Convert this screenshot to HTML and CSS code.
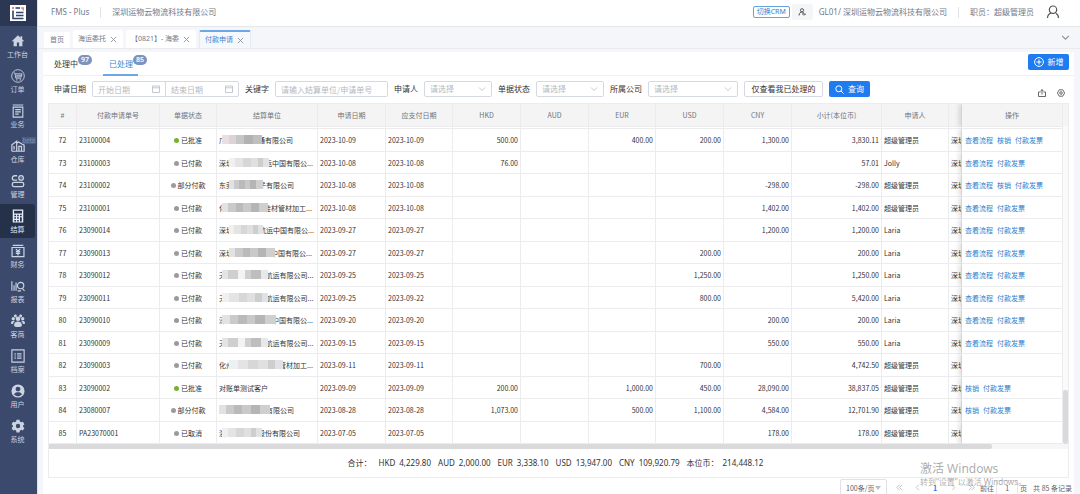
FILE: index.html
```html
<!DOCTYPE html>
<html lang="zh-CN">
<head>
<meta charset="utf-8">
<meta name="viewport" content="width=device-width, initial-scale=1">
<title>FMS - Plus 付款申请</title>
<link rel="stylesheet" href="styles.css">
</head>
<body>
<nav class="sidebar" aria-label="主导航">
  <div class="logo">
    <svg width="16" height="16" viewBox="0 0 16 16"><path fill="#fff" d="M0 0h16v16H0z"/><path d="M3 5.500v8h10.500M6 7.500h7.500M6 10.500h7.500" fill="none" stroke="#2f4470" stroke-width="1.600"/><path d="M5.500 3H10" stroke="#2f4470" stroke-width="1.600"/><path d="M11 3h2.300v2.500" fill="none" stroke="#e58a72" stroke-width="1.500"/><path d="M2 2h2v2H2z" fill="#e58a72"/></svg>
  </div>
  <a class="nav-item" href="#"><svg viewBox="0 0 16 16"><path fill="currentColor" d="M8 1.500 0.800 8.300h2.200V14h3.700V9.800h2.600V14H13V8.300h2.200L12.800 6V2.500h-2v1.700z"/></svg>工作台</a>
  <a class="nav-item" href="#"><svg viewBox="0 0 16 16" fill="none" stroke="currentColor"><circle cx="8" cy="8" r="7.200"/><path d="M3 4.500h1.500l1 6h6.300M5 5.500h7.500l-.8 3.500H5.300M6 7.200h6"/><path d="M6 12.500h1.300M10 12.500h1.300" stroke-width="1.300"/></svg>订单</a>
  <a class="nav-item" href="#"><svg viewBox="0 0 16 16" fill="none" stroke="currentColor" stroke-width="1.300"><path d="M2 1.200h12M2.500 3.500h11v11.500h-11zM4.800 6.500h6.400M4.800 9h6.400M4.800 11.500h4"/></svg>业务</a>
  <a class="nav-item" href="#"><span class="beta">beta</span><svg viewBox="0 0 16 16" fill="none" stroke="currentColor" stroke-width="1.400"><path d="M1 14V6.500L6.500 2.500V14M1 14h14V7L8.500 3.500 6.500 5M9 14V8.500h3V14M3.500 8v4"/></svg>仓库</a>
  <a class="nav-item" href="#"><svg viewBox="0 0 16 16" fill="none" stroke="currentColor" stroke-width="1.500"><path d="M7 2H4a2.500 2.500 0 0 0 0 5h3"/><circle cx="11.500" cy="4.500" r="2.600"/><rect x="1.500" y="9.500" width="13" height="5" rx="2"/><path d="M11 4.500h1"/></svg>管理</a>
  <a class="nav-item active" href="#"><svg viewBox="0 0 16 16"><path fill="currentColor" fill-rule="evenodd" d="M2 .5h12v15H2zM3.500 2v3h9V2zM3.800 6.500v1.700h1.900V6.500zm3.200 0v1.700h1.900V6.500zm3.300 0v1.700h2V6.500zM3.800 9.500v1.700h1.900V9.500zm3.200 0v1.700h1.900V9.500zm3.300 0v4.700h2V9.500zM3.800 12.500v1.700h1.900v-1.700zm3.200 0v1.700h1.900v-1.700z"/></svg>结算</a>
  <a class="nav-item" href="#"><svg viewBox="0 0 16 16" fill="none" stroke="currentColor" stroke-width="1.400"><path d="M2 1.500h12M1.200 4h13.600v10.500H1.200zM5.500 5.500 8 8.300l2.500-2.800M5.500 8.700h5M5.500 10.700h5M8 8.300V13"/></svg>财务</a>
  <a class="nav-item" href="#"><svg viewBox="0 0 16 16" fill="none" stroke="currentColor" stroke-width="1.300"><path d="M1 2.500V13.500M3.500 7v6.500M5.800 4v9.500M13 11l2.500 2.500M7.500 13.500h4"/><circle cx="11" cy="7.500" r="3.600"/></svg>报表</a>
  <a class="nav-item" href="#"><svg viewBox="0 0 16 16" fill="currentColor"><circle cx="8" cy="5.500" r="2.600"/><circle cx="2.600" cy="5.300" r="1.900"/><circle cx="13.400" cy="5.300" r="1.900"/><circle cx="5" cy="2.200" r="1.700"/><circle cx="11" cy="2.200" r="1.700"/><path d="M3.500 13c0-3 1.500-4.500 4.500-4.500s4.500 1.500 4.500 4.500c0 2.500-9 2.500-9 0zM0 10.500c0-2 1-3 3.500-2.800L4.500 8c-1.500 1-2 2-2 3.500C1 11.500 0 11.500 0 10.500zM16 10.500c0-2-1-3-3.500-2.800L11.500 8c1.500 1 2 2 2 3.500 1.500 0 2.500 0 2.500-1z"/></svg>客商</a>
  <a class="nav-item" href="#"><svg viewBox="0 0 16 16" fill="none" stroke="currentColor" stroke-width="1.300"><path d="M1 1h14v14H1zM4 5.500h1.500M4 8h1.500M4 10.500h1.500M7 5.500h5M7 8h5M7 10.500h5"/></svg>档案</a>
  <a class="nav-item" href="#"><svg viewBox="0 0 16 16"><path fill="currentColor" fill-rule="evenodd" d="M8 .5a7.500 7.500 0 1 0 0 15 7.500 7.500 0 0 0 0-15zM8 3a2.700 2.700 0 0 1 0 5.600A2.700 2.700 0 0 1 8 3zM3.500 12c.5-1.800 2.500-2.500 4.500-2.500s4 .7 4.500 2.500C11 13.500 9.500 14 8 14s-3-.5-4.500-2z"/></svg>用户</a>
  <a class="nav-item" href="#"><svg viewBox="0 0 16 16"><path fill="currentColor" fill-rule="evenodd" d="M6.300.8h3.400l.4 2 1.500.9 2-.7 1.700 2.900-1.500 1.400v1.500l1.500 1.400-1.700 2.900-2-.7-1.500.9-.4 2H6.300l-.4-2-1.500-.9-2 .7L.7 10.200l1.500-1.400V7.300L.7 5.900 2.400 3l2 .7 1.500-.9zM8 5.500a2.500 2.500 0 1 0 0 5 2.500 2.500 0 0 0 0-5z"/></svg>系统</a>
</nav>
<div class="page">
  <header class="topbar">
    <span>FMS - Plus</span><i class="divider"></i><span>深圳运物云物流科技有限公司</span>
    <div class="account">
      <button class="crm" type="button">切换CRM</button>
      <button class="switch-user" type="button" aria-label="切换账号"><svg width="8" height="8" viewBox="0 0 8 8" fill="none" stroke="#555"><circle cx="4" cy="2.300" r="1.600"/><path d="M1 7.500C1.300 5 2.500 4 4 4s1.500.5 1.500 1.500M4 6h3.500M6 7.500l1.500-1.500"/></svg></button>
      <span>GL01/ 深圳运物云物流科技有限公司</span><i class="divider"></i><span>职员：超级管理员</span>
      <svg class="avatar" width="14" height="14" viewBox="0 0 14 14" fill="none" stroke="#555" stroke-width="1.200"><circle cx="7" cy="4.700" r="3.700"/><path d="M1.500 13c0-2.500 1.500-4.300 3.700-5M12.500 13c0-2.500-1-3.800-2.700-4.700"/></svg>
    </div>
  </header>
  <div class="tabs">
    <a class="tab home" href="#">首页</a>
    <a class="tab" href="#">海运委托<svg class="x" viewBox="0 0 8 8"><path d="m1 1 6 6M7 1 1 7"/></svg></a>
    <a class="tab" href="#">【0821】- 海委<svg class="x" viewBox="0 0 8 8"><path d="m1 1 6 6M7 1 1 7"/></svg></a>
    <a class="tab current" href="#">付款申请<svg class="x" viewBox="0 0 8 8"><path d="m1 1 6 6M7 1 1 7"/></svg></a>
    <svg class="more" viewBox="0 0 8 8"><path d="m1 2.500 3 3 3-3"/></svg>
  </div>
  <main class="panel">
    <div class="views">
      <a class="view" href="#">处理中<span class="badge">97</span></a>
      <a class="view chosen" href="#">已处理<span class="badge">85</span></a>
      <button class="primary add" type="button"><svg width="10" height="10" viewBox="0 0 10 10" fill="none" stroke="currentColor"><circle cx="5" cy="5" r="4.400"/><path d="M5 2.500v5M2.500 5h5"/></svg>新增</button>
    </div>
    <form class="filters">
      <label for="from">申请日期</label>
      <span class="dates"><input id="from" placeholder="开始日期"><svg class="cal" viewBox="0 0 8 8"><path d="M.5 1h7v6.500h-7zM.5 2.800h7"/></svg><input aria-label="结束日期" placeholder="结束日期"><svg class="cal" viewBox="0 0 8 8"><path d="M.5 1h7v6.500h-7zM.5 2.800h7"/></svg></span>
      <label for="kw">关键字</label>
      <input class="box keyword" id="kw" placeholder="请输入结算单位/申请单号">
      <label for="who">申请人</label>
      <span class="box pick"><select id="who"><option>请选择</option></select><svg viewBox="0 0 8 8"><path d="m1 2.500 3 3 3-3"/></svg></span>
      <label for="state">单据状态</label>
      <span class="box pick"><select id="state"><option>请选择</option></select><svg viewBox="0 0 8 8"><path d="m1 2.500 3 3 3-3"/></svg></span>
      <label for="org">所属公司</label>
      <span class="box pick wide"><select id="org"><option>请选择</option></select><svg viewBox="0 0 8 8"><path d="m1 2.500 3 3 3-3"/></svg></span>
      <button class="box mine" type="button">仅查看我已处理的</button>
      <button class="primary" type="button"><svg width="9" height="9" viewBox="0 0 9 9" fill="none" stroke="currentColor"><circle cx="3.800" cy="3.800" r="3"/><path d="m6 6 2.500 2.500"/></svg>查询</button>
      <span class="tools">
        <button type="button" aria-label="导出"><svg width="8" height="8" viewBox="0 0 8 8" fill="none" stroke="#444" stroke-width=".8"><path d="M2.500 3H.5v4.500h7V3h-2M4 5.500V.7M2.500 2 4 .6 5.500 2"/></svg></button>
        <button type="button" aria-label="设置"><svg width="8" height="8" viewBox="0 0 8 8" fill="none" stroke="#444" stroke-width=".8"><path d="M2.200.8h3.600L7.600 4 5.800 7.200H2.200L.4 4z"/><circle cx="4" cy="4" r="1.300"/></svg></button>
      </span>
    </form>
    <section class="grid">
      <div class="viewport">
        <div class="scroller">
          <table>
            <colgroup><col class="c-no"><col class="c-bill"><col class="c-state"><col class="c-unit"><col class="c-std"><col class="c-67"><col class="c-std"><col class="c-std"><col class="c-67"><col class="c-std"><col class="c-std"><col class="c-sum"><col class="c-67"><col><col class="c-act"></colgroup>
            <thead><tr><th>#<th>付款申请单号<th>单据状态<th>结算单位<th>申请日期<th>应支付日期<th>HKD<th>AUD<th>EUR<th>USD<th>CNY<th>小计(本位币)<th>申请人<th><th class="act">操作</thead>
            <tbody>
            <tr class="sliver"><td><td><td><td><td><td><td><td><td><td><td><td><td><td><td class="act">
            <tr><td>72<td>23100004<td><i class="dot ok"></i>已批准<td>广<i class="mosaic m32 warm"></i>通有限公司<td>2023-10-09<td>2023-10-09<td>500.00<td><td>400.00<td>200.00<td>1,300.00<td>3,830.11<td>超级管理员<td>深圳<td class="act"><a href="#">查看流程</a><a href="#">核销</a><a href="#">付款发票</a>
            <tr><td>73<td>23100003<td><i class="dot"></i>已付款<td>深圳<i class="mosaic m32 pale"></i>运中国有限公...<td>2023-10-08<td>2023-10-08<td>76.00<td><td><td><td><td>57.01<td>Jolly<td>深圳<td class="act"><a href="#">查看流程</a><a href="#">付款发票</a>
            <tr><td>74<td>23100002<td><i class="dot"></i>部分付款<td>东莞<i class="mosaic m26"></i>子有限公司<td>2023-10-08<td>2023-10-08<td><td><td><td><td>-298.00<td>-298.00<td>超级管理员<td>深圳<td class="act"><a href="#">查看流程</a><a href="#">核销</a><a href="#">付款发票</a>
            <tr><td>75<td>23100001<td><i class="dot"></i>已付款<td>化<i class="mosaic m38"></i>硅材管材加工...<td>2023-10-08<td>2023-10-08<td><td><td><td><td>1,402.00<td>1,402.00<td>超级管理员<td>深圳<td class="act"><a href="#">查看流程</a><a href="#">付款发票</a>
            <tr><td>76<td>23090014<td><i class="dot"></i>已付款<td>深圳<i class="mosaic m26 pale"></i>航运中国有限公...<td>2023-09-27<td>2023-09-27<td><td><td><td><td>1,200.00<td>1,200.00<td>Laria<td>深圳<td class="act"><a href="#">查看流程</a><a href="#">付款发票</a>
            <tr><td>77<td>23090013<td><i class="dot"></i>已付款<td>深圳<i class="mosaic m38"></i>中国有限公...<td>2023-09-27<td>2023-09-27<td><td><td><td>200.00<td><td>200.00<td>Laria<td>深圳<td class="act"><a href="#">查看流程</a><a href="#">付款发票</a>
            <tr><td>78<td>23090012<td><i class="dot"></i>已付款<td>天<i class="mosaic m38 patch"></i> 航运有限公司...<td>2023-09-25<td>2023-09-25<td><td><td><td>1,250.00<td><td>1,250.00<td>Laria<td>深圳<td class="act"><a href="#">查看流程</a><a href="#">付款发票</a>
            <tr><td>79<td>23090011<td><i class="dot"></i>已付款<td>天<i class="mosaic m38 pale"></i> 航运有限公司...<td>2023-09-25<td>2023-09-22<td><td><td><td>800.00<td><td>5,420.00<td>Laria<td>深圳<td class="act"><a href="#">查看流程</a><a href="#">付款发票</a>
            <tr><td>80<td>23090010<td><i class="dot"></i>已付款<td>深<i class="mosaic m46"></i>中国有限公...<td>2023-09-20<td>2023-09-20<td><td><td><td><td>200.00<td>200.00<td>Laria<td>深圳<td class="act"><a href="#">查看流程</a><a href="#">付款发票</a>
            <tr><td>81<td>23090009<td><i class="dot"></i>已付款<td>天<i class="mosaic m38 patch"></i> 航运有限公司...<td>2023-09-15<td>2023-09-15<td><td><td><td><td>550.00<td>550.00<td>Laria<td>深圳<td class="act"><a href="#">查看流程</a><a href="#">付款发票</a>
            <tr><td>82<td>23090003<td><i class="dot"></i>已付款<td>化州<i class="mosaic m46 pale"></i>管材加工...<td>2023-09-11<td>2023-09-11<td><td><td><td>700.00<td><td>4,742.50<td>超级管理员<td>深圳<td class="act">
            <tr><td>83<td>23090002<td><i class="dot ok"></i>已批准<td>对账单测试客户<td>2023-09-09<td>2023-09-09<td>200.00<td><td>1,000.00<td>450.00<td>28,090.00<td>38,837.05<td>超级管理员<td>深圳<td class="act"><a href="#">核销</a><a href="#">付款发票</a>
            <tr><td>84<td>23080007<td><i class="dot"></i>部分付款<td><i class="mosaic m46 first"></i>有限公司<td>2023-08-28<td>2023-08-28<td>1,073.00<td><td>500.00<td>1,100.00<td>4,584.00<td>12,701.90<td>超级管理员<td>深圳<td class="act"><a href="#">核销</a><a href="#">付款发票</a>
            <tr><td>85<td>PA23070001<td><i class="dot"></i>已取消<td>浙<i class="mosaic m32 pale"></i>股份有限公司<td>2023-07-05<td>2023-07-05<td><td><td><td><td>178.00<td>178.00<td>超级管理员<td>深圳<td class="act">
            </tbody>
          </table>
        </div>
        <div class="vbar"><i></i></div>
      </div>
      <div class="hbar"><i></i></div>
      <div class="totals"><span>合计：</span><span>HKD&ensp;4,229.80</span><span>AUD&ensp;2,000.00</span><span>EUR&ensp;3,338.10</span><span>USD&ensp;13,947.00</span><span>CNY&ensp;109,920.79</span><span>本位币：&ensp;214,448.12</span></div>
    </section>
    <footer class="pager">
      <span class="size"><select aria-label="每页条数"><option>100条/页</option></select></span>
      <button type="button" aria-label="首页"><svg viewBox="0 0 8 8"><path d="M4 1 1 4l3 3M7 1 4 4l3 3"/></svg></button>
      <button type="button" aria-label="上一页"><svg viewBox="0 0 8 8"><path d="M5.500 1 2.500 4l3 3"/></svg></button>
      <button class="num" type="button">1</button>
      <button type="button" aria-label="下一页"><svg viewBox="0 0 8 8"><path d="m2.500 1 3 3-3 3"/></svg></button>
      <button type="button" aria-label="末页"><svg viewBox="0 0 8 8"><path d="m1 1 3 3-3 3M4 1l3 3-3 3"/></svg></button>
      <label for="goto">前往</label><input id="goto" value="1"><span>页</span><span class="count">共 85 条记录</span>
    </footer>
  </main>
</div>
<div class="watermark"><strong>激活 Windows</strong><span>转到“设置”以激活 Windows。</span></div>
</body>
</html>
```

FILE: styles.css
```css
* { box-sizing: border-box; }
body {
  margin: 0; height: 100vh; display: flex; overflow: hidden; position: relative;
  background: #f5f6fa; color: #333;
  font: 7px/10px "Noto Sans CJK SC", "Noto Sans", sans-serif;
}
a { color: inherit; text-decoration: none; }
i { font-style: normal; }
button, input, select { font: inherit; color: inherit; margin: 0; padding: 0; border: 0; background: none; outline: 0; }
svg { flex: none; }
.topbar, .tabs, .totals, .badge, .watermark { font-family: "Noto Sans", "Noto Sans CJK SC", sans-serif; }

.sidebar { flex: none; width: 37px; background: #3b4a6c; color: #ccd3e2; }
.logo { height: 26px; margin-bottom: 3px; background: #2b3753; display: flex; align-items: center; justify-content: center; padding-right: 2px; }
.nav-item { position: relative; height: 35px; padding: 5px 2px 0 0; display: flex; flex-direction: column; align-items: center; gap: 1px; }
.nav-item svg { width: 14px; height: 14px; }
.active { width: 35px; padding-right: 0; height: 34px; margin-bottom: 1px; background: #243149; border-radius: 0 3px 3px 0; color: #e4edfb; }
.beta { position: absolute; right: 1px; top: 3px; padding: 0 1px; border-radius: 1px; background: #4c5f85; color: #7f90b3; font-size: 6px; line-height: 7px; }

.page { flex: 1; min-width: 0; display: flex; flex-direction: column; border-left: 1px solid #dfe2ea; }
.topbar { height: 27px; flex: none; padding: 0 20px 2px 13px; display: flex; align-items: center; background: #fff; border-bottom: 1px solid #e6e8ec; color: #747986; font-size: 8px; white-space: nowrap; }
.divider { width: 1px; height: 11px; margin: 0 11px; background: #e0e3e8; }
.account { margin-left: auto; display: flex; align-items: center; }
.crm { height: 12px; width: 37px; border: 1px solid #66a3dd; border-radius: 2px; color: #2f80cc; font-size: 7px; line-height: 10px; }
.switch-user { width: 21px; height: 16px; margin: 0 6px 0 2px; border-radius: 2px; background: #f4f5f6; display: flex; align-items: center; justify-content: center; }
.avatar { margin-left: 12px; }

.tabs { height: 22px; flex: none; display: flex; align-items: flex-end; gap: 3px; padding: 0 10px 0 6px; border-bottom: 1px solid #e9ebef; color: #747986; white-space: nowrap; }
.tab { height: 18px; padding: 0 6px 0 5px; display: flex; align-items: center; gap: 4px; background: #fff; border-radius: 2px 2px 0 0; }
.home { height: 16px; padding: 0 6px; }
.current { border: 1px solid #e3eaf3; border-top: 2px solid #6aa9e6; border-bottom: 0; background: #f5f8fc; color: #3a86cf; }
.x { width: 7px; height: 7px; }
.x path, .more path, .pick path, .cal path, .pager path { fill: none; stroke: #8b909a; stroke-width: 1; }
.more { width: 9px; height: 9px; margin: 0 0 6px auto; }

.panel { flex: 1; min-height: 0; margin: 3px 6px 0 5px; background: #fff; }
.views { height: 24px; display: flex; align-items: flex-start; padding: 0 5px 0 11px; border-bottom: 1px solid #eff1f4; font-size: 8px; }
.view { position: relative; height: 24px; padding-top: 7px; margin-right: 25px; }
.chosen { color: #3a86cf; padding-left: 6px; padding-right: 5px; border-bottom: 2px solid #6aa9e6; }
.badge { position: absolute; right: -14px; top: 3px; width: 14px; border-radius: 5px; background: #7d93bb; color: #fff; font-size: 7px; font-weight: 600; line-height: 10px; text-align: center; }
.chosen .badge { right: -9px; }
.primary { height: 16px; width: 41px; border-radius: 2px; background: #1f7cf0; color: #fff; font-size: 8px; display: flex; align-items: center; justify-content: center; gap: 4px; }
.add { margin: 2px 0 0 auto; }

.filters { display: flex; align-items: center; gap: 6px; padding: 5px 9px 6px 11px; font-size: 8px; white-space: nowrap; }
.box, .dates { height: 16px; border: 1px solid #d5dae2; border-radius: 2px; }
.dates { width: 147px; display: flex; align-items: center; }
.dates input { flex: 1; min-width: 0; height: 14px; padding-left: 5px; }
.dates input + svg + input { border-left: 1px solid #d5dae2; }
.cal { width: 8px; height: 8px; margin-right: 5px; }
.cal path, .pick path { stroke: #c3c8d0; }
::placeholder { color: #b4b8c0; opacity: 1; }
.keyword { width: 113px; padding-left: 5px; }
.pick { width: 68px; display: flex; align-items: center; padding: 0 5px; }
.pick select { flex: 1; min-width: 0; appearance: none; color: #b4b8c0; }
.pick svg { width: 8px; height: 8px; }
.wide { width: 90px; }
.mine { width: 79px; }
.tools { display: flex; gap: 11px; margin: 8px 0 0 auto; }
.tools button { width: 8px; height: 8px; line-height: 0; }

.grid { margin: 0 5px; border: 1px solid #ececef; }
.viewport { display: flex; }
.scroller { flex: 1; min-width: 0; overflow: hidden; }
table { width: 100%; table-layout: fixed; border-collapse: separate; border-spacing: 0; }
.c-no { width: 28px; }
.c-bill { width: 83px; }
.c-state { width: 57px; }
.c-unit { width: 101px; }
.c-std { width: 68px; }
.c-67 { width: 67px; }
.c-sum { width: 90px; }
.c-act { width: 101px; }
th, td { border: 0 solid #ececef; border-width: 0 1px 1px 0; padding: 0 2px; height: 22px; white-space: nowrap; overflow: hidden; text-align: left; }
th { height: 23px; background: #f4f4f5; color: #70747c; font-weight: 400; text-align: center; }
.sliver td { height: 2px; line-height: 0; }
tbody tr:nth-child(even) td { height: 23px; }
td:nth-child(1), td:nth-child(3) { text-align: center; }
td:nth-child(n+7):nth-child(-n+12) { text-align: right; }
.act { position: sticky; right: 0; overflow: visible; border-left: 0; box-shadow: -3px 0 5px rgba(0, 0, 0, .13); clip-path: inset(0 0 0 -9px); }
td.act { background: #fff; padding-left: 3px; }
.act a { color: #2f80cc; margin-right: 4px; }
.dot { display: inline-block; width: 5px; height: 5px; margin-right: 2px; border-radius: 50%; background: #9b9b9b; }
.ok { background: #78b22c; }
.mosaic { display: inline-block; position: relative; height: 9px; vertical-align: top; box-sizing: content-box; padding: 0 4px; margin: 0 -4px; background: linear-gradient(90deg, #e2e2e2 0 14%, #cacaca 14% 30%, #bababa 30% 46%, #c9c9c9 46% 62%, #b5b5b5 62% 80%, #cfcfcf 80%); }
.pale { background: linear-gradient(90deg, #f0f0f0 0 16%, #e4e4e4 16% 36%, #d7d7d7 36% 54%, #e0e0e0 54% 72%, #cecece 72% 86%, #e2e2e2 86%); }
.warm { background: linear-gradient(90deg, #e8dfe2 0 18%, #ddd3d7 18% 36%, #c6c6c6 36% 56%, #b2b2b2 56% 78%, #bfbfbf 78%); }
.patch { background: linear-gradient(90deg, #e4e4e4 0 14%, #cfcfcf 14% 34%, #f3f3f3 34% 50%, #d0d0d0 50% 64%, #bebebe 64% 84%, #e8e8e8 84%); }
.m26 { width: 26px; }
.m32 { width: 32px; }
.m38 { width: 38px; }
.m46 { width: 46px; }
.first { margin-left: 0; width: 43px; }
.vbar { width: 5px; display: flex; align-items: flex-end; background: linear-gradient(#f4f4f5 22px, #fafafa 22px); }
.vbar i { flex: 1; height: 16%; border-radius: 2px; background: #d9d9db; }
.hbar { height: 5px; padding-right: 5px; background: #f6f6f7; }
.hbar i { display: block; width: 93%; height: 5px; border-radius: 0 2px 2px 0; background: #dadadc; }
.totals { height: 28px; display: flex; align-items: center; justify-content: center; gap: 7px; padding-right: 6px; font-size: 8px; white-space: nowrap; }

.pager { display: flex; align-items: center; justify-content: flex-end; padding: 1px 2px 0 0; color: #606266; white-space: nowrap; }
.size { display: flex; align-items: center; width: 47px; height: 17px; border: 1px solid #dfe2e8; border-radius: 2px; padding: 0 5px; margin-right: 3px; }
.size select { appearance: none; flex: 1; min-width: 0; }
.size::after { content: ""; border: 3px solid transparent; border-top: 4px solid #b9bdc5; border-bottom: 0; }
.pager button { width: 18px; height: 14px; display: flex; align-items: center; justify-content: center; }
.pager button svg { width: 7px; height: 7px; }
.pager path { stroke: #b9bdc5; }
.pager .num { color: #1f7cf0; font-weight: 700; }
.pager input { width: 22px; height: 16px; margin: 0 2px; border: 1px solid #e4e6eb; border-radius: 2px; text-align: center; }
.count { margin-left: 6px; }
.watermark { position: absolute; right: 54px; bottom: 6px; display: flex; flex-direction: column; color: rgba(120, 120, 120, .62); font-size: 8px; line-height: 12px; pointer-events: none; }
.watermark strong { font-weight: 400; font-size: 12px; line-height: 15px; }
```
